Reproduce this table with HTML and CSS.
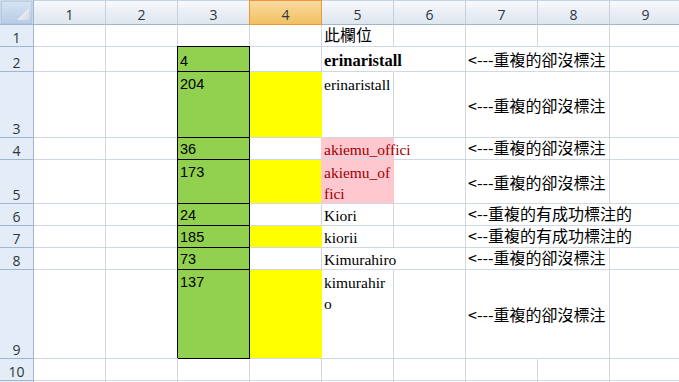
FILE: index.html
```html
<!DOCTYPE html>
<html lang="zh-Hant">
<head>
<meta charset="utf-8">
<title>Sheet</title>
<link rel="stylesheet" href="styles.css">
</head>
<body>
<div class="sheet">
  <!-- header row -->
  <div class="corner"><svg width="33" height="24" viewBox="0 0 33 24"><defs><linearGradient id="cg" x1="0" y1="0" x2="0" y2="1"><stop offset="0" stop-color="#d6e3f3"/><stop offset="1" stop-color="#b7cbe5"/></linearGradient><linearGradient id="tg" x1="0" y1="0" x2="1" y2="1"><stop offset="0" stop-color="#ffffff"/><stop offset="1" stop-color="#d3d8e0"/></linearGradient></defs><rect x="1" y="1" width="31" height="23" fill="url(#cg)" stroke="#a9bfd8" stroke-width="1"/><polygon points="29,8 29,20 17,20" fill="url(#tg)"/></svg></div>
  <div class="ch">1</div><div class="ch">2</div><div class="ch">3</div><div class="ch sel">4</div><div class="ch">5</div><div class="ch">6</div><div class="ch">7</div><div class="ch">8</div><div class="ch">9</div>

  <!-- row 1 -->
  <div class="rh"><span>1</span></div>
  <div class="c"></div><div class="c"></div><div class="c"></div><div class="c"></div>
  <div class="c cjk"><span>此欄位</span></div>
  <div class="c"></div><div class="c"></div><div class="c"></div><div class="c"></div>

  <!-- row 2 -->
  <div class="rh"><span>2</span></div>
  <div class="c"></div><div class="c"></div>
  <div class="c g num"><span>4</span></div>
  <div class="c"></div>
  <div class="c bold nr"><span>erinaristall</span></div>
  <div class="c"></div>
  <div class="c cjk nr"><span>&lt;---重複的卻沒標注</span></div>
  <div class="c"></div><div class="c"></div>

  <!-- row 3 -->
  <div class="rh"><span>3</span></div>
  <div class="c"></div><div class="c"></div>
  <div class="c g num t"><span>204</span></div>
  <div class="c y"></div>
  <div class="c t"><span>erinaristall</span></div>
  <div class="c"></div>
  <div class="c cjk m nr"><span>&lt;---重複的卻沒標注</span></div>
  <div class="c"></div><div class="c"></div>

  <!-- row 4 -->
  <div class="rh"><span>4</span></div>
  <div class="c"></div><div class="c"></div>
  <div class="c g num"><span>36</span></div>
  <div class="c"></div>
  <div class="c p"><span>akiemu_offici</span></div>
  <div class="c"></div>
  <div class="c cjk nr"><span>&lt;---重複的卻沒標注</span></div>
  <div class="c"></div><div class="c"></div>

  <!-- row 5 -->
  <div class="rh"><span>5</span></div>
  <div class="c"></div><div class="c"></div>
  <div class="c g num t"><span>173</span></div>
  <div class="c y"></div>
  <div class="c p t"><span>akiemu_of<br>fici</span></div>
  <div class="c"></div>
  <div class="c cjk m nr"><span>&lt;---重複的卻沒標注</span></div>
  <div class="c"></div><div class="c"></div>

  <!-- row 6 -->
  <div class="rh"><span>6</span></div>
  <div class="c"></div><div class="c"></div>
  <div class="c g num"><span>24</span></div>
  <div class="c"></div>
  <div class="c"><span>Kiori</span></div>
  <div class="c"></div>
  <div class="c cjk nr"><span>&lt;--重複的有成功標注的</span></div>
  <div class="c nr"></div><div class="c"></div>

  <!-- row 7 -->
  <div class="rh"><span>7</span></div>
  <div class="c"></div><div class="c"></div>
  <div class="c g num"><span>185</span></div>
  <div class="c y"></div>
  <div class="c"><span>kiorii</span></div>
  <div class="c"></div>
  <div class="c cjk nr"><span>&lt;--重複的有成功標注的</span></div>
  <div class="c nr"></div><div class="c"></div>

  <!-- row 8 -->
  <div class="rh"><span>8</span></div>
  <div class="c"></div><div class="c"></div>
  <div class="c g num"><span>73</span></div>
  <div class="c"></div>
  <div class="c nr"><span>Kimurahiro</span></div>
  <div class="c"></div>
  <div class="c cjk nr"><span>&lt;---重複的卻沒標注</span></div>
  <div class="c"></div><div class="c"></div>

  <!-- row 9 -->
  <div class="rh"><span>9</span></div>
  <div class="c"></div><div class="c"></div>
  <div class="c g num t"><span>137</span></div>
  <div class="c y"></div>
  <div class="c t"><span>kimurahir<br>o</span></div>
  <div class="c"></div>
  <div class="c cjk m nr"><span>&lt;---重複的卻沒標注</span></div>
  <div class="c"></div><div class="c"></div>

  <!-- row 10 -->
  <div class="rh"><span>10</span></div>
  <div class="c"></div><div class="c"></div><div class="c"></div><div class="c"></div><div class="c"></div><div class="c"></div><div class="c"></div><div class="c"></div><div class="c"></div>

  <!-- row 11 (only its top edge is visible) -->
  <div class="rh"></div>
  <div class="c"></div><div class="c"></div><div class="c"></div><div class="c"></div><div class="c"></div><div class="c"></div><div class="c"></div><div class="c"></div><div class="c"></div>
</div>
</body>
</html>
```

FILE: styles.css
```css
html, body {
  margin: 0;
  padding: 0;
  background: #ffffff;
  overflow: hidden;
}

.sheet {
  display: grid;
  grid-template-columns: 34px repeat(9, 72px);
  grid-template-rows: 25px 22px 25px 66px 22px 44px 22px 22px 22px 89px 22px 22px;
  width: 682px;
  background: #ffffff;
  font-family: "Liberation Serif", serif;
  color: #000;
}

/* corner */
.corner {
  box-sizing: border-box;
  border-right: 1px solid #9eb6ce;
  border-bottom: 1px solid #9eb6ce;
  background: #e4ecf7;
  overflow: hidden;
}
.corner svg {
  display: block;
}

/* column headers */
.ch {
  box-sizing: border-box;
  border-right: 1px solid #c3d0e0;
  border-bottom: 1px solid #9eb6ce;
  background: linear-gradient(#f8fafd, #e9eef5 55%, #dfe6ef);
  box-shadow: inset 0 1px 0 #c6d3e3;
  display: flex;
  align-items: center;
  justify-content: center;
  padding-top: 4px;
  font-family: "Open Sans", "DejaVu Sans", sans-serif;
  font-size: 14px;
  line-height: 19px;
  color: #2c3640;
}
.ch.sel {
  background: linear-gradient(#f9dba4, #f6cd7e 55%, #f1c060);
  border-right-color: #f29536;
  border-bottom-color: #f29536;
  box-shadow: -1px 0 0 #f29536, inset 0 1px 0 #f29536;
}

/* row headers */
.rh {
  box-sizing: border-box;
  border-right: 1px solid #9eb6ce;
  border-bottom: 1px solid #9eb6ce;
  background: #e4ecf7;
  display: flex;
  align-items: flex-end;
  justify-content: center;
  font-family: "Open Sans", "DejaVu Sans", sans-serif;
  font-size: 14px;
  line-height: 17px;
  color: #2c3640;
}

/* cells */
.c {
  box-sizing: border-box;
  border-right: 1px solid #d0d7e5;
  border-bottom: 1px solid #d0d7e5;
  display: flex;
  align-items: flex-end;
  padding-left: 2px;
  min-width: 0;
  white-space: nowrap;
  font-size: 15.5px;
  line-height: 19px;
}
.c.t {
  align-items: flex-start;
  padding-top: 2px;
  line-height: 21px;
}
.c.m {
  align-items: center;
}
.c.nr {
  border-right-color: transparent;
}
.num {
  font-family: "Liberation Sans", Arial, sans-serif;
  font-size: 14.5px;
}
.bold {
  font-weight: bold;
  font-size: 16.5px;
  line-height: 21px;
}
.cjk {
  font-family: "Noto Sans CJK TC", "Noto Sans CJK SC", sans-serif;
  font-size: 16px;
  line-height: 24px;
}
.cjk.m {
  line-height: 22px;
}

/* fills */
.g {
  background: #92d050;
  border-right-color: #000;
  border-bottom-color: #000;
  box-shadow: -1px -1px 0 #000, 0 -1px 0 #000;
}
.y {
  background: #ffff00;
  border-right-color: #ffff00;
}
.p {
  background: #ffc7ce;
  border-right-color: #ffc7ce;
  box-shadow: -1px 0 0 #ffc7ce;
  color: #9c0006;
}
```
